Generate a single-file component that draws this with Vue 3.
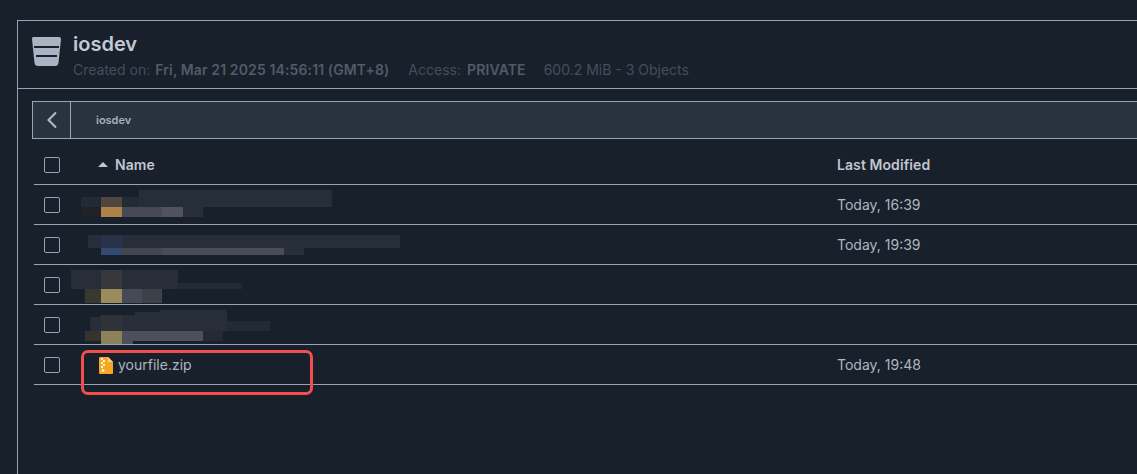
<script setup>
const block = (x, y, x2, y2, color) => ({ left: x - 34 + 'px', top: y - 1 + 'px', width: x2 - x + 'px', height: y2 - y + 'px', background: color })
const rows = [
  { date: 'Today, 16:39', blur: [
    [139, 6, 332, 23, '#262e39'], [81, 13, 139, 23, '#242a35'], [101, 13, 122, 23, '#4f463f'],
    [81, 23, 101, 33, '#1f2227'], [101, 23, 122, 33, '#ad8249'], [122, 23, 162, 33, '#454a54'],
    [162, 23, 183, 33, '#50535b'], [183, 23, 203, 33, '#272e38']] },
  { date: 'Today, 19:39', blur: [
    [88, 11, 400, 24, '#272e39'], [101, 11, 122, 24, '#28334a'], [101, 24, 122, 31, '#34496f'],
    [122, 24, 162, 31, '#41464f'], [162, 24, 284, 31, '#474c56'], [284, 24, 304, 31, '#272e38']] },
  { date: '', blur: [
    [71, 6, 178, 25, '#272e39'], [101, 6, 122, 25, '#37383c'], [178, 19, 242, 25, '#232a34'],
    [85, 25, 101, 39, '#38382f'], [101, 25, 122, 39, '#9a8c5f'], [122, 25, 142, 39, '#464a54'], [142, 25, 162, 39, '#3d4149']] },
  { date: '', blur: [
    [160, 6, 227, 27, '#272e39'], [135, 8, 160, 27, '#272e39'], [100, 11, 135, 27, '#272e39'], [90, 13, 100, 27, '#272e39'],
    [101, 11, 122, 27, '#2f3339'], [227, 17, 270, 27, '#232a34'],
    [85, 27, 101, 37, '#33342e'], [101, 27, 122, 40, '#8d8159'], [122, 27, 203, 37, '#4c505a'],
    [122, 37, 133, 40, '#4c505a'], [203, 27, 223, 37, '#232a34']] },
]
</script>

<template>
  <div class="page">
    <section class="panel">
      <header class="head">
        <svg class="bucket" width="30" height="30" viewBox="0 0 30 30">
          <path d="M2 0H28Q30 0 30 2L27.5 26Q27 29 24 29H7Q4 29 3.500 26L1 2Q1 0 2 0Z" fill="#a9b3c4" />
          <path d="M3 10H28" stroke="#18202b" stroke-width="2" />
          <path d="M5 19H26" stroke="#18202b" stroke-width="2" />
        </svg>
        <div class="head-text">
          <h1>iosdev</h1>
          <p class="meta">
            <span class="created">Created on:<b>Fri, Mar 21 2025 14:56:11 (GMT+8)</b></span>
            <span class="access">Access:<b>PRIVATE</b></span>
            <span>600.2 MiB - 3 Objects</span>
          </p>
        </div>
      </header>
      <div class="body">
        <nav class="crumb">
          <span class="back">
            <svg width="12" height="18" viewBox="0 0 12 18"><path d="M10 1.500L2.500 9L10 16.500" fill="none" stroke="#b4bcc9" stroke-width="2" /></svg>
          </span>
          <span class="crumb-name">iosdev</span>
        </nav>
        <div class="row row-head">
          <span class="check"></span>
          <span class="name-cell"><i class="tri"></i>Name</span>
          <span class="date-cell">Last Modified</span>
        </div>
        <div v-for="(r, i) in rows" :key="i" class="row">
          <span class="check"></span>
          <span class="name-cell"></span>
          <span class="date-cell">{{ r.date }}</span>
          <i v-for="(b, j) in r.blur" :key="j" class="pix" :style="block(b[0], b[1], b[2], b[3], b[4])"></i>
        </div>
        <div class="row">
          <span class="check"></span>
          <span class="name-cell file">
            <svg width="14" height="17" viewBox="0 0 14 17">
              <path d="M1 0H9L14 5V16Q14 17 13 17H1Q0 17 0 16V1Q0 0 1 0Z" fill="#f5a623" />
              <path d="M9 0L14 5H9Z" fill="#fbd27e" />
              <path d="M2 1h2v2H2zM4 3h2v2H4zM2 5h2v2H2zM4 7h2v2H4zM2 9h2v2H2z" fill="#fff3d6" />
              <circle cx="4" cy="13.500" r="1.500" fill="#fff3d6" />
            </svg>
            <span>yourfile.zip</span>
          </span>
          <span class="date-cell">Today, 19:48</span>
          <i class="mark"></i>
        </div>
      </div>
    </section>
  </div>
</template>

<style>
html, body { margin: 0; background: #18202b; }
</style>

<style scoped>
.page {
  width: 1137px;
  height: 474px;
  overflow: hidden;
  box-sizing: border-box;
  padding: 20px 0 0 17px;
  background: #18202b;
  font-family: Inter, "Liberation Sans", sans-serif;
}
.panel {
  width: 1140px;
  height: 470px;
  border: 1px solid #98a3b5;
  border-bottom: 0;
  box-sizing: border-box;
}
.head {
  display: flex;
  align-items: flex-start;
  height: 68px;
  box-sizing: border-box;
  padding: 16px 0 0 13px;
  gap: 12px;
  border-bottom: 1px solid #98a3b5;
}
.bucket { flex: none; }
h1 {
  margin: -5px 0 0;
  font-size: 20px;
  line-height: 24px;
  font-weight: 600;
  color: #c4cad4;
}
.meta {
  margin: 6px 0 0;
  font-size: 14px;
  line-height: 16px;
  color: #454e5b;
  white-space: nowrap;
}
.meta b { font-weight: 600; color: #515b69; letter-spacing: 0.12px; }
.created b { margin-left: 5px; }
.created { margin-right: 19px; }
.access b { margin-left: 6px; }
.access { margin-right: 18px; }
.body { padding: 12px 0 0 14px; }
.crumb {
  display: flex;
  align-items: center;
  height: 38px;
  box-sizing: border-box;
  border: 1px solid #98a3b5;
  border-right: 0;
  background: #29323f;
}
.back {
  width: 37px;
  height: 100%;
  display: flex;
  align-items: center;
  justify-content: center;
  border-right: 1px solid #98a3b5;
}
.crumb-name {
  margin-left: 25px;
  font-size: 11px;
  font-weight: 600;
  color: #a8afbb;
}
.row {
  position: relative;
  display: flex;
  align-items: center;
  height: 40px;
  margin-left: 2px;
  box-sizing: border-box;
  border-bottom: 1px solid #98a3b5;
  font-size: 14px;
  color: #aeb5c1;
}
.row-head {
  height: 46px;
  padding-top: 6px;
  font-weight: 600;
  letter-spacing: 0.08px;
  color: #c0c6d0;
}
.check {
  flex: none;
  width: 16px;
  height: 16px;
  margin: 1px 0 0 10px;
  box-sizing: border-box;
  border: 1px solid #98a3b5;
  border-radius: 2px;
}
.name-cell {
  display: flex;
  align-items: center;
  width: 777px;
  box-sizing: border-box;
  padding-left: 38px;
}
.tri {
  width: 0;
  height: 0;
  margin-right: 7px;
  border: 5px solid transparent;
  border-top: 0;
  border-bottom-color: #c0c6d0;
}
.file { gap: 5px; padding-left: 39px; margin-top: -1px; }
.file svg { margin-top: 3px; }
.date-cell { white-space: nowrap; }
.pix { position: absolute; }
.mark {
  position: absolute;
  left: 47px;
  top: 5px;
  width: 232px;
  height: 45px;
  box-sizing: border-box;
  border: 3px solid #f24e4e;
  border-radius: 7px;
}
</style>
